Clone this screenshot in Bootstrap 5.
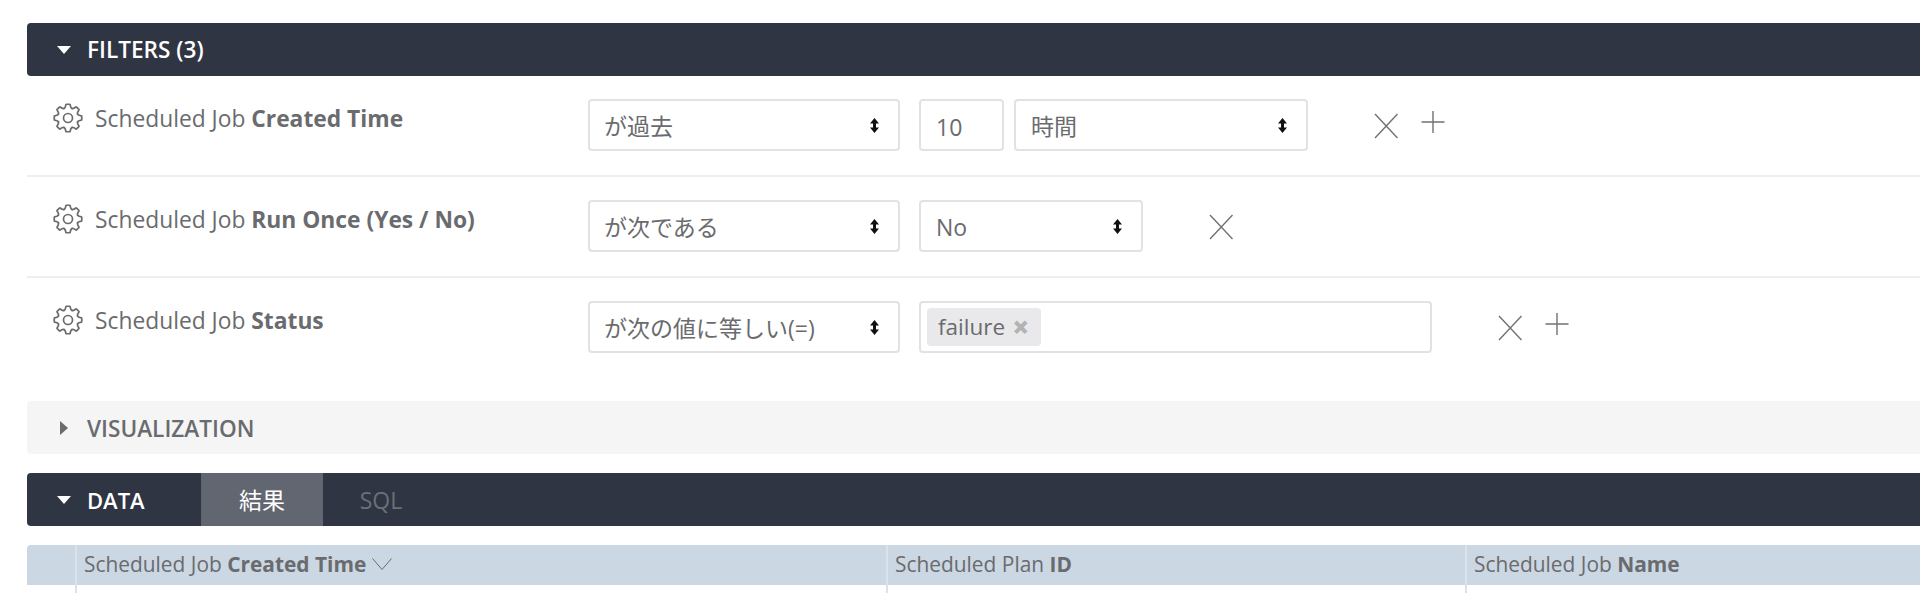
<!DOCTYPE html>
<html lang="ja">
<head>
<meta charset="utf-8">
<title>Explore</title>
<link href="https://cdn.jsdelivr.net/npm/bootstrap@5.3.0/dist/css/bootstrap.min.css" rel="stylesheet">
<style>
html,body{height:593px;overflow:hidden;background:#fff}
body{font-family:"Open Sans","Noto Sans CJK JP",sans-serif;font-size:22.8px;color:#6a6b6e}
.page-wrap{padding:23px 0 0 27px}
.sec-bar{height:53px;background:#2f3542;color:#fff;border-radius:4px 0 0 4px;font-size:22.6px;font-weight:600}
.sec-title{padding:1px 0 0 30px;gap:16px}
.tri-down{width:0;height:0;border-left:7.5px solid transparent;border-right:7.5px solid transparent;border-top:8px solid #fff}
.tri-right{width:0;height:0;border-top:7px solid transparent;border-bottom:7px solid transparent;border-left:8px solid #6a6b6e}
.flt-row{padding-top:23px;border-bottom:2px solid #eeeef0;height:101px}
.flt-row.last{border:0;height:auto;padding-bottom:48px}
.flt-name{width:561px;padding-left:26px;gap:12px;margin-top:3px}
.flt-name svg{flex:none;margin-top:1px}
.ctl{height:52px;border:2px solid #e2e2e4;border-radius:4px;font-size:23px;color:#6a6b6e;padding:3px 15px 0;box-shadow:none;font-family:inherit}
.form-select.ctl{background-position:right 19px center;background-size:9px 15px;background-image:url("data:image/svg+xml,%3Csvg xmlns='http://www.w3.org/2000/svg' viewBox='0 0 9 15'%3E%3Cpath d='M4.5 0L9 5.5H6V9.5H9L4.5 15 0 9.5H3V5.5H0z' fill='%23111'/%3E%3C/svg%3E")}
.form-select.w-op{width:312px;margin-right:19px;padding-left:14px}
.w-num{width:85px;margin-right:10px}
.w-unit{width:294px}
.w-yn{width:224px}
.w-tags{width:513px;padding:0 6px}
.chip{height:38px;width:114px;background:#e9e9eb;border-radius:4px;padding-left:11px;gap:7px;font-size:22.5px}
.chip-x{color:#b3b3b6;font-weight:800;font-size:30px;line-height:1}
.act-x{margin-left:66px;margin-top:14px}
.act-plus{margin-left:23px;margin-top:11px}
.vis-bar{height:53px;background:#f5f5f5;border-radius:4px 0 0 4px;font-weight:600;font-size:22.6px;margin-bottom:19px}
.vis-title{padding:2px 0 0 33px;gap:19px}
.tab-on{width:122px;background:#626670;font-weight:400;color:#fff;font-size:23px;padding-top:1px}
.tab-off{width:116px;font-weight:400;color:#6b6f79;font-size:23px;padding-top:1px}
.data-title{width:174px;padding:1px 0 0 30px;gap:16px;font-size:22px}
.res-head{margin-top:19px;height:40px;background:#cbd7e3;border-radius:4px 0 0 0;font-size:20.9px}
.res-cell{border-left:2px solid #dbe2e9;padding:4px 0 0 7px;height:48px}
.res-gut{width:48px}
.res-caret{margin-left:6px;margin-top:8px}
.w1{width:811px}.w2{width:579px}
</style>
</head>
<body>
<div class="page-wrap">
  <div class="sec-bar d-flex align-items-center">
    <div class="sec-title d-flex align-items-center"><span class="tri-down"></span><span>FILTERS (3)</span></div>
  </div>

  <div class="flt-row d-flex">
    <div class="flt-name d-flex align-items-start">
      <svg width="30" height="30" viewBox="0 0 24 24" fill="none" stroke="#6a6b6e" stroke-width="1.35" stroke-linejoin="round" stroke-linecap="round">
        <defs><g id="gearShape"><circle cx="12" cy="12" r="3.6"/><g id="toothA"><path id="tooth" d="M8.82 4.33C9.8 4 10 3.2 10.3 1.3Q10.4 1 10.7 1H13.3Q13.6 1 13.7 1.3C14 3.2 14.2 4 15.18 4.33"/><use href="#tooth" transform="rotate(45 12 12)"/><use href="#tooth" transform="rotate(90 12 12)"/><use href="#tooth" transform="rotate(135 12 12)"/></g><use href="#toothA" transform="rotate(180 12 12)"/></g></defs>
        <use href="#gearShape"/>
      </svg>
      <span>Scheduled Job <b>Created Time</b></span>
    </div>
    <select class="form-select ctl w-op"><option>が過去</option></select>
    <input class="form-control ctl w-num" value="10">
    <select class="form-select ctl w-unit"><option>時間</option></select>
    <svg class="act-x" width="24" height="26" viewBox="0 0 24 26" stroke="#707174" stroke-width="1.4"><path d="M1 1L23.5 25M23.5 1L1 25"/></svg>
    <svg class="act-plus" width="24" height="24" viewBox="0 0 24 24" stroke="#707174" stroke-width="1.4"><path d="M12 1v22M.5 12h23"/></svg>
  </div>

  <div class="flt-row d-flex">
    <div class="flt-name d-flex align-items-start">
      <svg width="30" height="30" viewBox="0 0 24 24" fill="none" stroke="#6a6b6e" stroke-width="1.35" stroke-linejoin="round" stroke-linecap="round"><use href="#gearShape"/></svg>
      <span>Scheduled Job <b>Run Once (Yes / No)</b></span>
    </div>
    <select class="form-select ctl w-op"><option>が次である</option></select>
    <select class="form-select ctl w-yn"><option>No</option></select>
    <svg class="act-x" width="24" height="26" viewBox="0 0 24 26" stroke="#707174" stroke-width="1.4"><path d="M1 1L23.5 25M23.5 1L1 25"/></svg>
  </div>

  <div class="flt-row last d-flex">
    <div class="flt-name d-flex align-items-start">
      <svg width="30" height="30" viewBox="0 0 24 24" fill="none" stroke="#6a6b6e" stroke-width="1.35" stroke-linejoin="round" stroke-linecap="round"><use href="#gearShape"/></svg>
      <span>Scheduled Job <b>Status</b></span>
    </div>
    <select class="form-select ctl w-op"><option>が次の値に等しい(=)</option></select>
    <div class="ctl w-tags d-flex align-items-center"><span class="chip d-flex align-items-center"><span>failure</span><span class="chip-x">×</span></span></div>
    <svg class="act-x" width="24" height="26" viewBox="0 0 24 26" stroke="#707174" stroke-width="1.4"><path d="M1 1L23.5 25M23.5 1L1 25"/></svg>
    <svg class="act-plus" width="24" height="24" viewBox="0 0 24 24" stroke="#707174" stroke-width="1.4"><path d="M12 1v22M.5 12h23"/></svg>
  </div>

  <div class="vis-bar d-flex align-items-center">
    <div class="vis-title d-flex align-items-center"><span class="tri-right"></span><span>VISUALIZATION</span></div>
  </div>

  <div class="sec-bar d-flex align-items-stretch">
    <div class="data-title d-flex align-items-center"><span class="tri-down"></span><span>DATA</span></div>
    <div class="tab-on d-flex align-items-center justify-content-center">結果</div>
    <div class="tab-off d-flex align-items-center justify-content-center">SQL</div>
  </div>

  <div class="res-head d-flex">
    <div class="res-gut"></div>
    <div class="res-cell w1 d-flex align-items-start"><span>Scheduled Job <b>Created Time</b></span>
      <svg class="res-caret" width="20" height="14" viewBox="0 0 20 14" fill="none" stroke="#6a6b6e" stroke-width="1"><path d="M.5 1.5L10 12.5 19.5 1.5"/></svg></div>
    <div class="res-cell w2"><span>Scheduled Plan <b>ID</b></span></div>
    <div class="res-cell flex-grow-1"><span>Scheduled Job <b>Name</b></span></div>
  </div>
</div>
</body>
</html>
